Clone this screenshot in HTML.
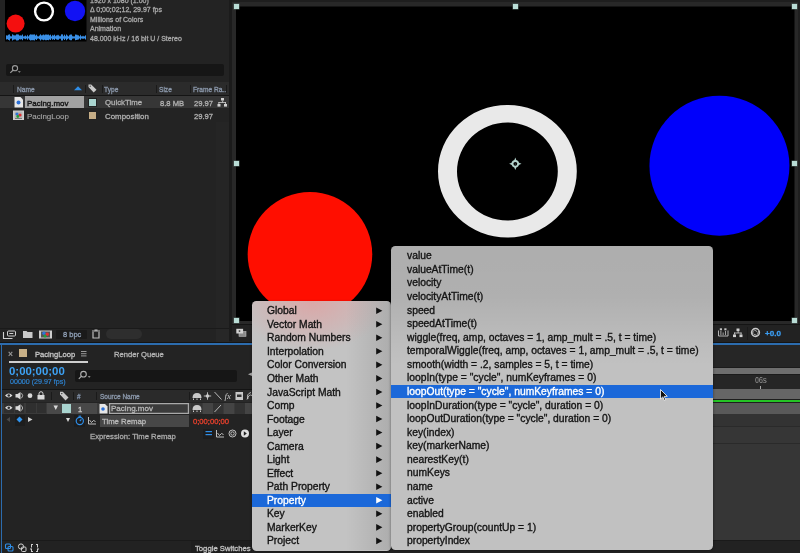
<!DOCTYPE html>
<html><head><meta charset="utf-8">
<style>
*{margin:0;padding:0;box-sizing:border-box}
html,body{width:800px;height:553px;overflow:hidden;background:#232323;font-family:"Liberation Sans",sans-serif}
.a{position:absolute}
.t{position:absolute;white-space:nowrap;line-height:1;-webkit-text-stroke:0.3px currentColor;will-change:transform}
.mi{position:absolute;white-space:nowrap;font-size:10.3px;line-height:13.5px;height:13.5px;-webkit-text-stroke:0.35px currentColor;will-change:transform}
.ar{position:absolute;width:0;height:0;border-left:6.2px solid #111;border-top:3.5px solid transparent;border-bottom:3.5px solid transparent}
.hd{position:absolute;width:5.3px;height:5.3px;background:#b9ddd6;box-shadow:0 0 0 0.5px #50605d}
svg{position:absolute;overflow:visible}
</style></head><body>

<div class="a" style="left:0px;top:0px;width:229px;height:329px;background:#232323;"></div>
<div class="a" style="left:216px;top:122px;width:13px;height:219px;background:#252525;"></div>
<svg style="left:0;top:0" width="100" height="45">
<rect x="5" y="0" width="81.5" height="41.5" fill="#000"/>
<circle cx="15.6" cy="23.6" r="9" fill="#f40f0f"/>
<circle cx="44" cy="11.5" r="8.9" fill="none" stroke="#fff" stroke-width="2.4"/>
<circle cx="75" cy="11" r="10.2" fill="#1212f4"/>
<g fill="#3a8fe6">
<rect x="6" y="35.05" width="1" height="4.5" rx="0.4"/><rect x="7" y="35.30" width="1" height="4" rx="0.4"/><rect x="8" y="34.55" width="1" height="5.5" rx="0.4"/><rect x="9" y="34.05" width="1" height="6.5" rx="0.4"/><rect x="10" y="35.80" width="1" height="3" rx="0.4"/><rect x="11" y="36.05" width="1" height="2.5" rx="0.4"/><rect x="12" y="34.05" width="1" height="6.5" rx="0.4"/><rect x="13" y="34.80" width="1" height="5" rx="0.4"/><rect x="14" y="35.05" width="1" height="4.5" rx="0.4"/><rect x="15" y="35.05" width="1" height="4.5" rx="0.4"/><rect x="16" y="34.05" width="1" height="6.5" rx="0.4"/><rect x="17" y="34.05" width="1" height="6.5" rx="0.4"/><rect x="18" y="34.30" width="1" height="6" rx="0.4"/><rect x="19" y="35.30" width="1" height="4" rx="0.4"/><rect x="20" y="35.05" width="1" height="4.5" rx="0.4"/><rect x="21" y="35.30" width="1" height="4" rx="0.4"/><rect x="22" y="34.30" width="1" height="6" rx="0.4"/><rect x="23" y="36.05" width="1" height="2.5" rx="0.4"/><rect x="24" y="35.80" width="1" height="3" rx="0.4"/><rect x="25" y="35.30" width="1" height="4" rx="0.4"/><rect x="26" y="36.05" width="1" height="2.5" rx="0.4"/><rect x="27" y="34.80" width="1" height="5" rx="0.4"/><rect x="28" y="36.05" width="1" height="2.5" rx="0.4"/><rect x="29" y="34.80" width="1" height="5" rx="0.4"/><rect x="30" y="34.05" width="1" height="6.5" rx="0.4"/><rect x="31" y="34.30" width="1" height="6" rx="0.4"/><rect x="32" y="34.30" width="1" height="6" rx="0.4"/><rect x="33" y="34.30" width="1" height="6" rx="0.4"/><rect x="34" y="34.05" width="1" height="6.5" rx="0.4"/><rect x="35" y="35.30" width="1" height="4" rx="0.4"/><rect x="36" y="34.55" width="1" height="5.5" rx="0.4"/><rect x="37" y="35.80" width="1" height="3" rx="0.4"/><rect x="38" y="36.05" width="1" height="2.5" rx="0.4"/><rect x="39" y="35.30" width="1" height="4" rx="0.4"/><rect x="40" y="34.05" width="1" height="6.5" rx="0.4"/><rect x="41" y="35.05" width="1" height="4.5" rx="0.4"/><rect x="42" y="34.80" width="1" height="5" rx="0.4"/><rect x="43" y="34.30" width="1" height="6" rx="0.4"/><rect x="44" y="34.80" width="1" height="5" rx="0.4"/><rect x="45" y="34.30" width="1" height="6" rx="0.4"/><rect x="46" y="34.30" width="1" height="6" rx="0.4"/><rect x="47" y="34.55" width="1" height="5.5" rx="0.4"/><rect x="48" y="34.30" width="1" height="6" rx="0.4"/><rect x="49" y="35.05" width="1" height="4.5" rx="0.4"/><rect x="50" y="34.55" width="1" height="5.5" rx="0.4"/><rect x="51" y="36.05" width="1" height="2.5" rx="0.4"/><rect x="52" y="34.80" width="1" height="5" rx="0.4"/><rect x="53" y="35.30" width="1" height="4" rx="0.4"/><rect x="54" y="34.55" width="1" height="5.5" rx="0.4"/><rect x="55" y="35.80" width="1" height="3" rx="0.4"/><rect x="56" y="35.05" width="1" height="4.5" rx="0.4"/><rect x="57" y="34.80" width="1" height="5" rx="0.4"/><rect x="58" y="34.80" width="1" height="5" rx="0.4"/><rect x="59" y="35.80" width="1" height="3" rx="0.4"/><rect x="60" y="35.80" width="1" height="3" rx="0.4"/><rect x="61" y="34.05" width="1" height="6.5" rx="0.4"/><rect x="62" y="34.05" width="1" height="6.5" rx="0.4"/><rect x="63" y="35.80" width="1" height="3" rx="0.4"/><rect x="64" y="34.55" width="1" height="5.5" rx="0.4"/><rect x="65" y="35.80" width="1" height="3" rx="0.4"/><rect x="66" y="34.30" width="1" height="6" rx="0.4"/><rect x="67" y="35.30" width="1" height="4" rx="0.4"/><rect x="68" y="36.05" width="1" height="2.5" rx="0.4"/><rect x="69" y="34.80" width="1" height="5" rx="0.4"/><rect x="70" y="34.30" width="1" height="6" rx="0.4"/><rect x="71" y="34.30" width="1" height="6" rx="0.4"/><rect x="72" y="35.80" width="1" height="3" rx="0.4"/><rect x="73" y="36.05" width="1" height="2.5" rx="0.4"/><rect x="74" y="36.05" width="1" height="2.5" rx="0.4"/><rect x="75" y="34.30" width="1" height="6" rx="0.4"/><rect x="76" y="34.55" width="1" height="5.5" rx="0.4"/><rect x="77" y="34.80" width="1" height="5" rx="0.4"/><rect x="78" y="35.05" width="1" height="4.5" rx="0.4"/><rect x="79" y="36.05" width="1" height="2.5" rx="0.4"/><rect x="80" y="34.80" width="1" height="5" rx="0.4"/><rect x="81" y="36.05" width="1" height="2.5" rx="0.4"/><rect x="82" y="35.80" width="1" height="3" rx="0.4"/><rect x="83" y="35.80" width="1" height="3" rx="0.4"/><rect x="84" y="36.05" width="1" height="2.5" rx="0.4"/><rect x="85" y="35.05" width="1" height="4.5" rx="0.4"/>
<rect x="6" y="37" width="80" height="1"/></g></svg>
<div class="t" style="left:90px;top:-3.13px;font-size:7px;color:#a9a9a9;">1920 x 1080 (1.00)</div>
<div class="t" style="left:90px;top:6.32px;font-size:7px;color:#a9a9a9;">Δ 0;00;02;12, 29.97 fps</div>
<div class="t" style="left:90px;top:15.77px;font-size:7px;color:#a9a9a9;">Millions of Colors</div>
<div class="t" style="left:90px;top:25.22px;font-size:7px;color:#a9a9a9;">Animation</div>
<div class="t" style="left:90px;top:34.67px;font-size:7px;color:#a9a9a9;">48.000 kHz / 16 bit U / Stereo</div>
<div class="a" style="left:6px;top:64px;width:218px;height:12px;background:#161616;border-radius:2px"></div>
<svg style="left:0;top:0" width="30" height="80"><circle cx="15" cy="68.2" r="2.6" fill="none" stroke="#9a9a9a" stroke-width="1.1"/><path d="M13.2,70 L10.3,72.9" stroke="#9a9a9a" stroke-width="1.2"/><path d="M17.8,71.2 h3 l-1.5,1.6z" fill="#9a9a9a"/></svg>
<div class="a" style="left:0px;top:82px;width:229px;height:13px;background:#2b2b2b;"></div>
<div class="a" style="left:0px;top:95px;width:229px;height:0.8px;background:#141414;"></div>
<div class="a" style="left:12.5px;top:85px;width:1px;height:8px;background:#1a1a1a;"></div>
<div class="a" style="left:85px;top:85px;width:1px;height:8px;background:#1a1a1a;"></div>
<div class="a" style="left:102px;top:85px;width:1px;height:8px;background:#1a1a1a;"></div>
<div class="a" style="left:155.6px;top:85px;width:1px;height:8px;background:#1a1a1a;"></div>
<div class="a" style="left:189.6px;top:85px;width:1px;height:8px;background:#1a1a1a;"></div>
<div class="a" style="left:225.6px;top:85px;width:1px;height:8px;background:#1a1a1a;"></div>
<div class="t" style="left:16.5px;top:86.81px;font-size:6.6px;color:#8b98ab;">Name</div>
<svg style="left:0;top:0" width="100" height="100"><path d="M74,90.2 L78,86.2 L82,90.2 Z" fill="#2f8ee8"/><path d="M88.5,87 L88.5,84.5 L91.2,84.5 L96.5,89.8 L93.7,92.6 Z" fill="#c9c9c9"/><circle cx="90.2" cy="86.2" r="0.6" fill="#2b2b2b"/></svg>
<div class="t" style="left:104px;top:86.81px;font-size:6.6px;color:#8b98ab;">Type</div>
<div class="t" style="left:159px;top:86.81px;font-size:6.6px;color:#8b98ab;">Size</div>
<div class="t" style="left:193px;top:86.81px;font-size:6.6px;color:#8b98ab;">Frame Ra..</div>
<div class="a" style="left:0px;top:95.5px;width:229px;height:12.8px;background:#363636;"></div>
<div class="a" style="left:25px;top:96px;width:59px;height:12px;background:#a2a2a2;"></div>
<div class="t" style="left:27px;top:99.57px;font-size:7.95px;color:#161616;-webkit-text-stroke:0.4px currentColor">Pacing.mov</div>
<div class="t" style="left:27px;top:112.87px;font-size:7.95px;color:#a9a9a9;-webkit-text-stroke:0.1px currentColor">PacingLoop</div>
<div class="a" style="left:89px;top:98.5px;width:7px;height:7px;background:#a9d4cf;box-shadow:0 0 0 1px #222"></div>
<div class="a" style="left:89px;top:112px;width:7px;height:7px;background:#c5ad86;box-shadow:0 0 0 1px #222"></div>
<div class="t" style="left:105px;top:99.40px;font-size:7.8px;color:#b0b0b0;">QuickTime</div>
<div class="t" style="left:105px;top:112.91px;font-size:7.9px;color:#b0b0b0;">Composition</div>
<div class="t" style="left:160px;top:99.57px;font-size:7.6px;color:#b0b0b0;">8.8 MB</div>
<div class="t" style="left:194px;top:99.57px;font-size:7.6px;color:#b0b0b0;">29.97</div>
<div class="t" style="left:194px;top:113.17px;font-size:7.6px;color:#b0b0b0;">29.97</div>
<svg style="left:0;top:0" width="240" height="130">
<path d="M14.5,97 h6 l2.5,2.5 v8 h-8.5z" fill="#e6e6e6"/><circle cx="18.5" cy="102.5" r="2" fill="#2a6fd6"/>
<rect x="13" y="110.5" width="11" height="9.5" fill="#d0d0d0"/><rect x="14.5" y="111.5" width="8" height="7" fill="#b5b5b5"/><rect x="15" y="118.3" width="7" height="0.6" fill="#444"/><circle cx="17" cy="114" r="1.6" fill="#2f74d8"/><circle cx="20" cy="115" r="1.6" fill="#e23030"/><circle cx="17.8" cy="116.5" r="1.4" fill="#22a03a"/>
<g fill="#d0d0d0"><rect x="221" y="98" width="3" height="2.5"/><rect x="222.3" y="100.5" width="0.8" height="2"/><rect x="218.5" y="102" width="7.5" height="0.8"/><rect x="218.5" y="102" width="0.8" height="2"/><rect x="225.2" y="102" width="0.8" height="2"/><rect x="217.5" y="104" width="3" height="2.6"/><rect x="224" y="104" width="3" height="2.6"/></g>
</svg>
<div class="a" style="left:0px;top:328px;width:229px;height:1px;background:#1a1a1a;"></div>
<div class="a" style="left:0px;top:329px;width:229px;height:12.5px;background:#232323;"></div>
<div class="a" style="left:216px;top:329px;width:13px;height:12.5px;background:#272727;"></div>
<div class="a" style="left:56px;top:329.7px;width:31.3px;height:9.2px;background:#1a1a1a;border-radius:1px"></div>
<div class="t" style="left:63px;top:330.95px;font-size:7.5px;color:#8f9fb5;">8 bpc</div>
<div class="a" style="left:106.4px;top:329px;width:35.2px;height:10px;background:#2e2e2e;border-radius:5px"></div>
<svg style="left:0;top:0" width="240" height="345">
<g fill="none" stroke="#cfcfcf" stroke-width="1">
<rect x="7.5" y="331" width="8" height="5" rx="1"/>
</g>
<path d="M3.5,332 v6.5 h9" fill="none" stroke="#cfcfcf" stroke-width="1.1"/>
<rect x="9.3" y="333" width="4" height="1" fill="#cfcfcf"/>
<path d="M23,331 h3.5 l1,1 h5 v6 h-9.5z" fill="#c8c8c8"/>
<rect x="39" y="330.5" width="13" height="8" fill="#cdcdcd"/><rect x="41" y="331.5" width="9" height="6" fill="#555"/><circle cx="44" cy="333.3" r="1.7" fill="#2f74d8"/><circle cx="47.2" cy="334.2" r="1.7" fill="#e23030"/><circle cx="45" cy="336" r="1.5" fill="#22a03a"/>
<path d="M92,331 h8 M93,332 v6 h6 v-6" fill="none" stroke="#bdbdbd" stroke-width="1.2"/><rect x="94.5" y="329.5" width="3" height="1.3" fill="#bdbdbd"/>
</svg>
<div class="a" style="left:229px;top:0px;width:2.5px;height:341px;background:#1b1b1b;"></div>
<div class="a" style="left:231.5px;top:0px;width:568.5px;height:341px;background:#282828;"></div>
<div class="a" style="left:231.5px;top:0px;width:568.5px;height:2px;background:#1e1e1e;"></div>
<div class="a" style="left:797.5px;top:0px;width:2.5px;height:341px;background:#1f1f1f;"></div>
<svg style="left:0;top:0" width="800" height="341">
  <rect x="236" y="6.5" width="558.5" height="314.5" fill="#000"/>
  <circle cx="309.95" cy="254.25" r="62.3" fill="#ff0e00"/>
  <path fill="#e9e9e9" fill-rule="evenodd" d="M438,171.25 a69.4,66.25 0 1,0 138.8,0 a69.4,66.25 0 1,0 -138.8,0 Z M457,171.5 a50.4,49 0 1,0 100.8,0 a50.4,49 0 1,0 -100.8,0 Z"/>
  <circle cx="719.45" cy="165.7" r="70" fill="#0000fb"/>
  <g fill="#b3d3cd"><path d="M515.3,157.6 L517,161.9 L521.5,163.8 L517,165.7 L515.3,170 L513.6,165.7 L509.1,163.8 L513.6,161.9 Z"/><circle cx="515.3" cy="163.8" r="3.7"/></g><circle cx="515.3" cy="163.8" r="1.9" fill="#000"/><circle cx="515.3" cy="164" r="0.5" fill="#6a7a78"/>
</svg>
<div class="hd" style="left:233.5px;top:4px"></div>
<div class="hd" style="left:512.5px;top:4px"></div>
<div class="hd" style="left:792px;top:4px"></div>
<div class="hd" style="left:233.5px;top:160.8px"></div>
<div class="hd" style="left:792px;top:160.8px"></div>
<div class="hd" style="left:233.5px;top:318px"></div>
<div class="hd" style="left:792px;top:318px"></div>
<div class="a" style="left:231.5px;top:325px;width:568.5px;height:16.5px;background:#222222;"></div>
<div class="a" style="left:231.5px;top:324px;width:568.5px;height:1px;background:#141414;"></div>
<svg style="left:0;top:0" width="800" height="345">
<rect x="239" y="331.5" width="7" height="4.8" fill="#8a8a8a" stroke="#bdbdbd" stroke-width="0.6"/><rect x="236.3" y="328.8" width="6.8" height="4.7" fill="#d2d2d2"/><path d="M238.8,329.9 l2,1.2 l-2,1.2z" fill="#333"/>
<g fill="none" stroke="#c4c4c4" stroke-width="0.9"><path d="M718.5,330.5 v5.5 h9.5 v-5.5"/></g><g fill="#c4c4c4"><rect x="719.8" y="328.3" width="2.2" height="2"/><rect x="724.3" y="328.3" width="2.2" height="2"/><rect x="720.5" y="331" width="0.8" height="4"/><rect x="722.7" y="332.5" width="0.8" height="2.5"/><rect x="725" y="331" width="0.8" height="4"/></g>
<g fill="#d0d0d0"><rect x="736.5" y="328.5" width="3" height="2.6"/><rect x="737.7" y="331" width="0.8" height="2"/><rect x="734" y="332.6" width="7.5" height="0.8"/><rect x="734" y="332.6" width="0.8" height="2"/><rect x="740.7" y="332.6" width="0.8" height="2"/><rect x="733" y="334.5" width="3" height="2.6"/><rect x="739.5" y="334.5" width="3" height="2.6"/></g>
<rect x="747" y="327" width="1" height="13" fill="#1a1a1a"/>
<circle cx="755.5" cy="332.5" r="3.9" fill="none" stroke="#c9c9c9" stroke-width="1.5"/><g stroke="#c9c9c9" stroke-width="0.8" fill="none"><path d="M753.5,329.5 l3.5,2 M758.5,331 l-1,3.5 M757,335.5 l-3.5,-1.5 M752.5,334 l0.8,-3.5"/></g>
</svg>
<div class="t" style="left:765px;top:330.14px;font-size:8.1px;color:#3b9cf0;font-weight:bold">+0.0</div>
<div class="a" style="left:231.5px;top:341.5px;width:568.5px;height:1.5px;background:#1b1b1b;"></div>
<div class="a" style="left:0px;top:341.5px;width:800px;height:1.8px;background:#141414;"></div>
<div class="a" style="left:0px;top:343px;width:800px;height:2px;background:#2c6cae;"></div>
<div class="a" style="left:0.8px;top:343px;width:1.4px;height:210px;background:#2c6cae;"></div>
<div class="a" style="left:2.2px;top:345px;width:797.8px;height:196px;background:#232323;"></div>
<div class="t" style="left:7.8px;top:350.10px;font-size:8.5px;color:#9a9a9a;">×</div>
<div class="a" style="left:19px;top:349px;width:7.5px;height:7.5px;background:#c8b087;"></div>
<div class="t" style="left:34.5px;top:351.07px;font-size:7.6px;color:#c5c5c5;">PacingLoop</div>
<svg style="left:0;top:0" width="100" height="360"><g fill="#9a9a9a"><rect x="81" y="351" width="5.5" height="1"/><rect x="81" y="353.2" width="5.5" height="1"/><rect x="81" y="355.4" width="5.5" height="1"/></g></svg>
<div class="a" style="left:8.5px;top:361px;width:79.5px;height:1.6px;background:#cfcfcf;"></div>
<div class="t" style="left:114.4px;top:351.07px;font-size:7.6px;color:#b5b5b5;">Render Queue</div>
<div class="t" style="left:8.5px;top:365.65px;font-size:11.4px;color:#3da2f4;font-weight:bold;-webkit-text-stroke:0">0;00;00;00</div>
<div class="t" style="left:9.5px;top:379.49px;font-size:7.1px;color:#2e86d6;-webkit-text-stroke:0.15px currentColor">00000 (29.97 fps)</div>
<div class="a" style="left:74.5px;top:369.5px;width:162.5px;height:12.3px;background:#161616;border-radius:2px"></div>
<svg style="left:0;top:0" width="260" height="390"><circle cx="83.5" cy="374.2" r="2.8" fill="none" stroke="#b0b0b0" stroke-width="1.1"/><path d="M81.5,376.2 L78.8,378.9" stroke="#b0b0b0" stroke-width="1.2"/><path d="M87.8,376.3 h2.8 l-1.4,1.5z" fill="#b0b0b0"/>
<path d="M252,372.5 l-4,1.8 l4,1.8z" fill="#aaa"/></svg>
<div class="a" style="left:2.2px;top:388.5px;width:797.8px;height:1.3px;background:#141414;"></div>
<div class="a" style="left:2.2px;top:389.8px;width:250px;height:12.6px;background:#2a2a2a;"></div>
<div class="a" style="left:50.5px;top:392px;width:1px;height:8px;background:#1a1a1a;"></div>
<div class="a" style="left:72.5px;top:392px;width:1px;height:8px;background:#1a1a1a;"></div>
<div class="a" style="left:96px;top:392px;width:1px;height:8px;background:#1a1a1a;"></div>
<div class="a" style="left:188.7px;top:392px;width:1px;height:8px;background:#1a1a1a;"></div>
<div class="t" style="left:76.5px;top:393.80px;font-size:6.5px;color:#7f8ea5;">#</div>
<svg style="left:0;top:0" width="100" height="410"><path d="M60,394.5 L60,391.8 L62.8,391.8 L68.5,397.5 L65.5,400.5 Z" fill="#c9c9c9"/><circle cx="61.8" cy="393.6" r="0.7" fill="#2a2a2a"/></svg>
<div class="t" style="left:99.6px;top:394.10px;font-size:6.5px;color:#8b98ab;">Source Name</div>
<div class="a" style="left:2.2px;top:402.5px;width:250px;height:11.5px;background:#3a3a3a;"></div>
<div class="a" style="left:46.5px;top:402.5px;width:50px;height:11.5px;background:#484848;"></div>
<div class="a" style="left:4px;top:403.2px;width:9.5px;height:10px;background:#2f2f2f;"></div>
<div class="a" style="left:15px;top:403.2px;width:9px;height:10px;background:#2f2f2f;"></div>
<div class="a" style="left:26px;top:403.2px;width:9.5px;height:10px;background:#2f2f2f;"></div>
<div class="a" style="left:36.5px;top:403.2px;width:9px;height:10px;background:#2f2f2f;"></div>
<div class="a" style="left:62px;top:404px;width:9px;height:9px;background:#a9d4cf;"></div>
<div class="t" style="left:77.5px;top:405.57px;font-size:7.6px;color:#c8c8c8;">1</div>
<div class="a" style="left:109px;top:403px;width:80px;height:11px;background:#3b3b3b;box-shadow:inset 0 0 0 1.2px #a9a9a9"></div>
<div class="t" style="left:111.3px;top:404.99px;font-size:8.05px;color:#b8b8b8;">Pacing.mov</div>
<div class="a" style="left:191px;top:403px;width:11px;height:11px;background:#333;"></div>
<div class="a" style="left:202.5px;top:403px;width:10px;height:11px;background:#444;"></div>
<div class="a" style="left:213px;top:403px;width:10px;height:11px;background:#333;"></div>
<div class="a" style="left:223.5px;top:403px;width:10.5px;height:11px;background:#444;"></div>
<div class="a" style="left:234.5px;top:403px;width:10px;height:11px;background:#333;"></div>
<div class="a" style="left:245px;top:403px;width:7px;height:11px;background:#444;"></div>
<div class="a" style="left:2.2px;top:414px;width:250px;height:13px;background:#232323;"></div>
<div class="a" style="left:15px;top:415px;width:9.5px;height:11px;background:#1d1d1d;"></div>
<div class="a" style="left:74px;top:414.5px;width:11px;height:12px;background:#1d1d1d;"></div>
<div class="a" style="left:100px;top:415px;width:89px;height:11.5px;background:#474747;"></div>
<div class="t" style="left:102.3px;top:418.44px;font-size:7.75px;color:#b8b8b8;">Time Remap</div>
<div class="t" style="left:193.2px;top:418.32px;font-size:7.65px;color:#e8402c;-webkit-text-stroke:0.3px currentColor">0;00;00;00</div>
<div class="t" style="left:89.5px;top:433.28px;font-size:7.7px;color:#a9a9a9;">Expression: Time Remap</div>
<div class="a" style="left:203px;top:429px;width:11px;height:10px;background:#1d1d1d;"></div>
<svg style="left:0;top:0" width="260" height="450">
<g fill="#d9d9d9">
<path d="M5,395.5 q3.7,-4 7.5,0 q-3.8,4 -7.5,0z"/><circle cx="8.75" cy="395.5" r="1.3" fill="#2a2a2a"/>
<path d="M5,407.8 q3.7,-4 7.5,0 q-3.8,4 -7.5,0z"/><circle cx="8.75" cy="407.8" r="1.3" fill="#2f2f2f"/>
<path d="M15.5,394 h2 l3,-2 v7.5 l-3,-2 h-2z"/><path d="M21.5,393.2 q2.4,2.5 0,5" fill="none" stroke="#d9d9d9" stroke-width="0.8"/>
<path d="M15.5,406.3 h2 l3,-2 v7.5 l-3,-2 h-2z"/><path d="M21.5,405.5 q2.4,2.5 0,5" fill="none" stroke="#d9d9d9" stroke-width="0.8"/>
<circle cx="30" cy="395.7" r="2.4"/>
<rect x="37.5" y="395" width="7" height="4.5"/><path d="M39,395 v-1.3 a2,2 0 0,1 4,0 v1.3" fill="none" stroke="#d9d9d9" stroke-width="1"/>
<path d="M53.5,405.5 h4.5 l-2.25,4.5z"/>
<path d="M66,418 h4 l-2,4z"/>
<path d="M28,417 l4.5,2.5 l-4.5,2.5z" fill="#cfcfcf"/>
</g>
<path d="M10,417 l-3.5,2.5 l3.5,2.5z" fill="#4a4a4a"/>
<path d="M19.5,416.5 l3,3 l-3,3 l-3,-3z" fill="#2f94f0"/>
<g fill="none" stroke="#2f8ee8" stroke-width="1.2"><circle cx="79.8" cy="421" r="3.6"/><path d="M79.8,421 l1.6,-1.6"/><path d="M78.5,416.2 h2.6"/></g>
<g fill="none" stroke="#cfcfcf" stroke-width="0.9"><path d="M88.5,417 v7 h7.5"/><path d="M89.5,420 l2,2.5 l2,-2 l2,1"/></g>
<path d="M99.5,404 h5.5 l2.5,2.5 v7 h-8z" fill="#e6e6e6"/><circle cx="103" cy="409" r="1.8" fill="#2a6fd6"/>
<g fill="#c9c9c9">
<path d="M192.5,398 q0,-5 4.5,-5 q4.5,0 4.5,5z"/><rect x="193" y="398.5" width="1" height="1.5"/><rect x="196.5" y="398.5" width="1" height="1.5"/><rect x="200" y="398.5" width="1" height="1.5"/>
<path d="M192.5,410 q0,-5 4.5,-5 q4.5,0 4.5,5z"/><rect x="193" y="410.5" width="1" height="1.5"/><rect x="196.5" y="410.5" width="1" height="1.5"/><rect x="200" y="410.5" width="1" height="1.5"/>
<circle cx="207.5" cy="396" r="1.8"/>
<rect x="235.5" y="392" width="7.5" height="8"/>
</g>
<g stroke="#c9c9c9" stroke-width="0.9" fill="none"><path d="M207.5,392.3 v7.4 M203.8,396 h7.4"/><path d="M214.5,392 l7,7.5"/><path d="M221,405 l-6.5,7"/><path d="M248,399 q-2,-5 3,-6.5 M247,399.5 q2,-6 5,-4"/></g>
<rect x="237" y="394.5" width="4.5" height="2.5" fill="#333"/>
<text x="224.5" y="399" font-family="Liberation Serif" font-style="italic" font-size="9" fill="#c9c9c9">fx</text>
<g fill="#2f8ee8"><rect x="205.5" y="431" width="6.5" height="1.2"/><rect x="205.5" y="434" width="6.5" height="1.2"/></g>
<g fill="none" stroke="#cfcfcf" stroke-width="0.9"><path d="M216.5,430 v7 h7.5"/><path d="M217.5,433 l2,2.5 l2,-2 l2,1"/><circle cx="232.5" cy="433.5" r="3.5"/><circle cx="232.5" cy="433.5" r="1.7"/></g>
<circle cx="245" cy="433.5" r="4" fill="#e0e0e0"/><path d="M243.8,431.3 l3,2.2 l-3,2.2z" fill="#222"/>
</svg>
<div class="a" style="left:713px;top:345px;width:87px;height:21.5px;background:#262626;"></div>
<div class="a" style="left:713px;top:366.5px;width:87px;height:1.5px;background:#1b1b1b;"></div>
<div class="a" style="left:713px;top:368px;width:87px;height:5.7px;background:#6e6e6e;"></div>
<div class="a" style="left:713px;top:373.7px;width:87px;height:1.3px;background:#1b1b1b;"></div>
<div class="a" style="left:713px;top:375px;width:87px;height:13.5px;background:#262626;"></div>
<div class="t" style="left:754.8px;top:375.92px;font-size:8.6px;color:#9c9c9c;transform:scaleX(0.83);transform-origin:0 0;-webkit-text-stroke:0">06s</div>
<div class="a" style="left:760px;top:386px;width:1px;height:2.5px;background:#a8a8a8;"></div>
<div class="a" style="left:713px;top:388.7px;width:87px;height:10.3px;background:#666666;"></div>
<div class="a" style="left:713px;top:399px;width:87px;height:1px;background:#1e1e1e;"></div>
<div class="a" style="left:713px;top:400px;width:87px;height:2.4px;background:#24c424;"></div>
<div class="a" style="left:713px;top:402.4px;width:87px;height:0.6px;background:#1e1e1e;"></div>
<div class="a" style="left:713px;top:403px;width:87px;height:11px;background:#595959;"></div>
<div class="a" style="left:713px;top:414px;width:87px;height:11.6px;background:#333333;"></div>
<div class="a" style="left:713px;top:425.6px;width:87px;height:1px;background:#2a2a2a;"></div>
<div class="a" style="left:713px;top:426.6px;width:87px;height:16.6px;background:#363636;"></div>
<div class="a" style="left:713px;top:443.2px;width:87px;height:1px;background:#2a2a2a;"></div>
<div class="a" style="left:713px;top:444.2px;width:87px;height:96.4px;background:#363636;"></div>
<div class="a" style="left:2.2px;top:541px;width:797.8px;height:12px;background:#222222;"></div>
<div class="a" style="left:2.2px;top:540.3px;width:797.8px;height:1px;background:#1a1a1a;"></div>
<svg style="left:0;top:0" width="260" height="553">
<g fill="none" stroke="#2f8ee8" stroke-width="1.1"><rect x="5.5" y="544" width="5" height="4.5" rx="1"/><rect x="8" y="546.5" width="5" height="4.5" rx="1"/></g>
<g fill="none" stroke="#cfcfcf" stroke-width="1"><circle cx="21" cy="546.5" r="2.6"/><rect x="21.5" y="547" width="4.5" height="4.5" rx="1"/></g>
<g fill="#cfcfcf"><path d="M31,544 h2 v1 h-1 v2 l-1,1 l1,1 v2 h1 v1 h-2 v-2 l-1,-1 l1,-1z"/><path d="M38,544 h-2 v1 h1 v2 l1,1 l-1,1 v2 h-1 v1 h2 v-2 l1,-1 l-1,-1z"/></g>
</svg>
<div class="a" style="left:191px;top:541.3px;width:61px;height:12px;background:#1e1e1e;"></div>
<div class="t" style="left:195.3px;top:545.08px;font-size:7.7px;color:#c6c6c6;width:57px;overflow:hidden">Toggle Switches</div>
<div class="a" style="left:252px;top:301px;width:139px;height:249.8px;border-radius:4.5px;overflow:hidden;background:#c3c3c3;box-shadow:0 1px 3px rgba(0,0,0,.3)">
  <div class="a" style="left:0;top:0;width:139px;height:249px;background:radial-gradient(ellipse 75px 50px at 60px 0px,rgba(225,160,160,.8),rgba(215,175,175,0) 100%)"></div>
  <div class="a" style="right:0;top:0;width:45px;height:249px;background:linear-gradient(to right,rgba(150,150,150,0),rgba(140,140,140,.4))"></div>
  <div class="a" style="left:0;top:193px;width:139px;height:13.3px;background:#1b68d9"></div>
  <div class="mi" style="top:3.30px;left:15px;color:#141414">Global</div>
  <svg style="left:0;top:0" width="139" height="249"><path d="M124.2,6.40 L130.4,9.70 L124.2,13.00 Z" fill="#111"/></svg>
  <div class="mi" style="top:16.84px;left:15px;color:#141414">Vector Math</div>
  <svg style="left:0;top:0" width="139" height="249"><path d="M124.2,19.94 L130.4,23.24 L124.2,26.54 Z" fill="#111"/></svg>
  <div class="mi" style="top:30.38px;left:15px;color:#141414">Random Numbers</div>
  <svg style="left:0;top:0" width="139" height="249"><path d="M124.2,33.48 L130.4,36.78 L124.2,40.08 Z" fill="#111"/></svg>
  <div class="mi" style="top:43.92px;left:15px;color:#141414">Interpolation</div>
  <svg style="left:0;top:0" width="139" height="249"><path d="M124.2,47.02 L130.4,50.32 L124.2,53.62 Z" fill="#111"/></svg>
  <div class="mi" style="top:57.46px;left:15px;color:#141414">Color Conversion</div>
  <svg style="left:0;top:0" width="139" height="249"><path d="M124.2,60.56 L130.4,63.86 L124.2,67.16 Z" fill="#111"/></svg>
  <div class="mi" style="top:71.00px;left:15px;color:#141414">Other Math</div>
  <svg style="left:0;top:0" width="139" height="249"><path d="M124.2,74.10 L130.4,77.40 L124.2,80.70 Z" fill="#111"/></svg>
  <div class="mi" style="top:84.54px;left:15px;color:#141414">JavaScript Math</div>
  <svg style="left:0;top:0" width="139" height="249"><path d="M124.2,87.64 L130.4,90.94 L124.2,94.24 Z" fill="#111"/></svg>
  <div class="mi" style="top:98.08px;left:15px;color:#141414">Comp</div>
  <svg style="left:0;top:0" width="139" height="249"><path d="M124.2,101.18 L130.4,104.48 L124.2,107.78 Z" fill="#111"/></svg>
  <div class="mi" style="top:111.62px;left:15px;color:#141414">Footage</div>
  <svg style="left:0;top:0" width="139" height="249"><path d="M124.2,114.72 L130.4,118.02 L124.2,121.32 Z" fill="#111"/></svg>
  <div class="mi" style="top:125.16px;left:15px;color:#141414">Layer</div>
  <svg style="left:0;top:0" width="139" height="249"><path d="M124.2,128.26 L130.4,131.56 L124.2,134.86 Z" fill="#111"/></svg>
  <div class="mi" style="top:138.70px;left:15px;color:#141414">Camera</div>
  <svg style="left:0;top:0" width="139" height="249"><path d="M124.2,141.80 L130.4,145.10 L124.2,148.40 Z" fill="#111"/></svg>
  <div class="mi" style="top:152.24px;left:15px;color:#141414">Light</div>
  <svg style="left:0;top:0" width="139" height="249"><path d="M124.2,155.34 L130.4,158.64 L124.2,161.94 Z" fill="#111"/></svg>
  <div class="mi" style="top:165.78px;left:15px;color:#141414">Effect</div>
  <svg style="left:0;top:0" width="139" height="249"><path d="M124.2,168.88 L130.4,172.18 L124.2,175.48 Z" fill="#111"/></svg>
  <div class="mi" style="top:179.32px;left:15px;color:#141414">Path Property</div>
  <svg style="left:0;top:0" width="139" height="249"><path d="M124.2,182.42 L130.4,185.72 L124.2,189.02 Z" fill="#111"/></svg>
  <div class="mi" style="top:192.86px;left:15px;color:#fff">Property</div>
  <svg style="left:0;top:0" width="139" height="249"><path d="M124.2,195.96 L130.4,199.26 L124.2,202.56 Z" fill="#fff"/></svg>
  <div class="mi" style="top:206.40px;left:15px;color:#141414">Key</div>
  <svg style="left:0;top:0" width="139" height="249"><path d="M124.2,209.50 L130.4,212.80 L124.2,216.10 Z" fill="#111"/></svg>
  <div class="mi" style="top:219.94px;left:15px;color:#141414">MarkerKey</div>
  <svg style="left:0;top:0" width="139" height="249"><path d="M124.2,223.04 L130.4,226.34 L124.2,229.64 Z" fill="#111"/></svg>
  <div class="mi" style="top:233.48px;left:15px;color:#141414">Project</div>
  <svg style="left:0;top:0" width="139" height="249"><path d="M124.2,236.58 L130.4,239.88 L124.2,243.18 Z" fill="#111"/></svg>
</div>
<div class="a" style="left:391px;top:246.3px;width:322px;height:304.2px;border-radius:4.5px;overflow:hidden;background:#c1c1c1;box-shadow:0 0 3px rgba(0,0,0,.45)">
  <div class="a" style="left:0;top:0;width:322px;height:304px;background:linear-gradient(to bottom,rgba(0,0,0,.1) 0px,rgba(0,0,0,.09) 50px,rgba(0,0,0,.02) 100px,rgba(0,0,0,0) 120px)"></div>
  <div class="a" style="left:0;top:138.7px;width:322px;height:13.4px;background:#1b68d9"></div>
  <div class="mi" style="top:3.00px;left:15.5px;color:#141414">value</div>
  <div class="mi" style="top:16.57px;left:15.5px;color:#141414">valueAtTime(t)</div>
  <div class="mi" style="top:30.14px;left:15.5px;color:#141414">velocity</div>
  <div class="mi" style="top:43.71px;left:15.5px;color:#141414">velocityAtTime(t)</div>
  <div class="mi" style="top:57.28px;left:15.5px;color:#141414">speed</div>
  <div class="mi" style="top:70.85px;left:15.5px;color:#141414">speedAtTime(t)</div>
  <div class="mi" style="top:84.42px;left:15.5px;color:#141414">wiggle(freq, amp, octaves = 1, amp_mult = .5, t = time)</div>
  <div class="mi" style="top:97.99px;left:15.5px;color:#141414">temporalWiggle(freq, amp, octaves = 1, amp_mult = .5, t = time)</div>
  <div class="mi" style="top:111.56px;left:15.5px;color:#141414">smooth(width = .2, samples = 5, t = time)</div>
  <div class="mi" style="top:125.13px;left:15.5px;color:#141414">loopIn(type = &quot;cycle&quot;, numKeyframes = 0)</div>
  <div class="mi" style="top:138.70px;left:15.5px;color:#fff">loopOut(type = &quot;cycle&quot;, numKeyframes = 0)</div>
  <div class="mi" style="top:152.27px;left:15.5px;color:#141414">loopInDuration(type = &quot;cycle&quot;, duration = 0)</div>
  <div class="mi" style="top:165.84px;left:15.5px;color:#141414">loopOutDuration(type = &quot;cycle&quot;, duration = 0)</div>
  <div class="mi" style="top:179.41px;left:15.5px;color:#141414">key(index)</div>
  <div class="mi" style="top:192.98px;left:15.5px;color:#141414">key(markerName)</div>
  <div class="mi" style="top:206.55px;left:15.5px;color:#141414">nearestKey(t)</div>
  <div class="mi" style="top:220.12px;left:15.5px;color:#141414">numKeys</div>
  <div class="mi" style="top:233.69px;left:15.5px;color:#141414">name</div>
  <div class="mi" style="top:247.26px;left:15.5px;color:#141414">active</div>
  <div class="mi" style="top:260.83px;left:15.5px;color:#141414">enabled</div>
  <div class="mi" style="top:274.40px;left:15.5px;color:#141414">propertyGroup(countUp = 1)</div>
  <div class="mi" style="top:287.97px;left:15.5px;color:#141414">propertyIndex</div>
</div>
<svg style="left:0;top:0" width="800" height="553"><path d="M660.5,389.5 v9.5 l2.3,-2.1 l1.6,3.6 l1.4,-0.6 l-1.6,-3.5 l3.1,-0.1z" fill="#111" stroke="#fff" stroke-width="0.8"/></svg>
</body></html>
